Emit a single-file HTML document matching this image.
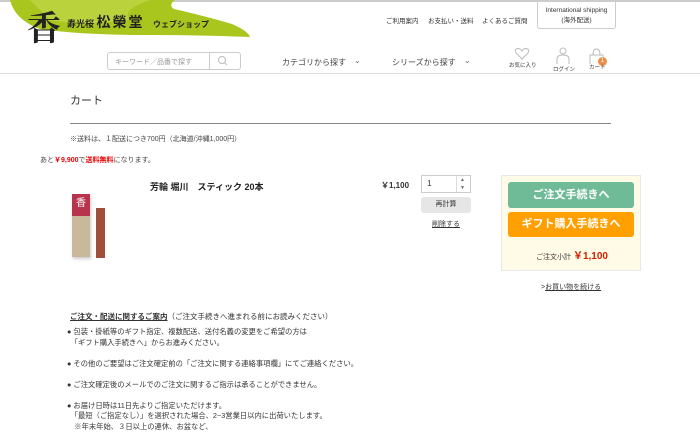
<!DOCTYPE html>
<html><head><meta charset="utf-8"><style>
*{margin:0;padding:0;box-sizing:border-box}
body{width:700px;height:431px;overflow:hidden;background:#fff;font-family:"Liberation Sans","Noto Sans CJK JP",sans-serif;color:#333;position:relative}
.a{position:absolute;white-space:nowrap}
</style></head><body>
<div class="a" style="left:0;top:0;width:700px;height:2px;background:#ccc"></div>
<svg class="a" style="left:0;top:0" width="260" height="40"><path d="M10 0 L175 0 Q168 5 174 9 Q205 16 232 24 Q248 31 250 37 Q200 35 150 35 Q80 35 40 29 Q15 20 10 0Z" fill="#a9c61e"/><path d="M30 0 L150 0 Q120 10 130 20 Q80 26 50 20 Z" fill="#c2d94a" opacity=".7"/></svg>
<div class="a" style="left:27px;top:1px;font:bold 34px 'Noto Serif CJK SC',serif;color:#222">香</div>
<div class="a" style="left:67px;top:12px;font-size:9px;color:#222;font-weight:bold">寿光桜 <span style="font-size:14px;letter-spacing:2px">松榮堂</span> <span style="font-size:8px;margin-left:6px">ウェブショップ</span></div>
<div class="a" style="left:386px;top:15px;font-size:6.5px">ご利用案内</div>
<div class="a" style="left:428px;top:15px;font-size:6.5px">お支払い・送料</div>
<div class="a" style="left:482px;top:15px;font-size:6.5px">よくあるご質問</div>
<div class="a" style="left:537px;top:0;width:79px;height:29px;border:1px solid #ccc;border-top:none;border-radius:0 0 3px 3px;font-size:6.5px;text-align:center;line-height:10px;padding-top:6px">International shipping<br>(海外配送)</div>
<div class="a" style="left:107px;top:52px;width:134px;height:18px;border:1px solid #ccc;border-radius:3px"></div>
<div class="a" style="left:209px;top:52px;width:1px;height:18px;background:#ccc"></div>
<div class="a" style="left:115px;top:57px;font-size:7px;color:#999">キーワード／品番で探す</div>
<svg class="a" style="left:217px;top:55px" width="12" height="12"><circle cx="5" cy="5" r="3.5" fill="none" stroke="#bbb"/><path d="M7.5 7.5 L10 10" stroke="#bbb"/></svg>
<div class="a" style="left:282px;top:57px;font-size:8px;color:#444">カテゴリから探す</div>
<div class="a" style="left:354px;top:56px;font-size:8px;color:#666">⌄</div>
<div class="a" style="left:392px;top:57px;font-size:8px;color:#444">シリーズから探す</div>
<div class="a" style="left:464px;top:56px;font-size:8px;color:#666">⌄</div>
<svg class="a" style="left:514px;top:47px" width="16" height="14"><path d="M8 12 L2 6 Q0 2 4 1.5 Q7 1.5 8 4 Q9 1.5 12 1.5 Q16 2 14 6Z" fill="none" stroke="#bbb"/></svg>
<div class="a" style="left:509px;top:61px;font-size:5.5px">お気に入り</div>
<svg class="a" style="left:556px;top:47px" width="14" height="18"><circle cx="7" cy="4" r="3" fill="none" stroke="#bbb"/><path d="M1 17 V12 Q1 8 7 8 Q13 8 13 12 V17" fill="none" stroke="#bbb"/></svg>
<div class="a" style="left:553px;top:65px;font-size:5.5px">ログイン</div>
<svg class="a" style="left:589px;top:47px" width="16" height="18"><path d="M1 17 V8 H14 V17 M4 8 Q4 2 7.5 2 Q11 2 11 8" fill="none" stroke="#bbb"/></svg>
<div class="a" style="left:598px;top:57px;width:9px;height:9px;border-radius:50%;background:#e8904a;color:#fff;font-size:6px;text-align:center;line-height:9px">1</div>
<div class="a" style="left:589px;top:63px;font-size:5.5px">カート</div>
<div class="a" style="left:0;top:73px;width:700px;height:1px;background:#ddd"></div>
<div class="a" style="left:70px;top:92px;font-size:11px;color:#333">カート</div>
<div class="a" style="left:70px;top:123px;width:541px;height:1px;background:#888"></div>
<div class="a" style="left:70px;top:134px;font-size:7px;color:#444">※送料は、１配送につき700円（北海道/沖縄1,000円）</div>
<div class="a" style="left:40px;top:155px;font-size:7px;color:#444">あと<b style="color:#e00">￥9,900</b>で<b style="color:#e00">送料無料</b>になります。</div>
<div class="a" style="left:72px;top:194px;width:18px;height:63px;background:#c9b99c;box-shadow:1px 2px 3px #ccc"></div>
<div class="a" style="left:72px;top:194px;width:18px;height:22px;background:#b8344e;color:#fff;font-size:10px;text-align:center">香</div>
<div class="a" style="left:96px;top:208px;width:9px;height:50px;background:#a0503a"></div>
<div class="a" style="left:150px;top:180px;font-size:9px;font-weight:bold;color:#222">芳輪 堀川　スティック 20本</div>
<div class="a" style="left:381px;top:180px;font-size:8px;font-weight:bold;color:#333">￥1,100</div>
<div class="a" style="left:421px;top:175px;width:50px;height:18px;border:1px solid #ccc;font-size:8px;padding:3px 5px">1</div>
<div class="a" style="left:456px;top:176px;width:1px;height:16px;background:#ddd"></div>
<div class="a" style="left:460px;top:176px;font-size:5px;color:#666;line-height:8px">▲<br>▼</div>
<div class="a" style="left:421px;top:197px;width:50px;height:16px;background:#e6e6e6;border-radius:3px;font-size:7px;text-align:center;line-height:16px">再計算</div>
<div class="a" style="left:432px;top:219px;font-size:7px;text-decoration:underline">削除する</div>
<div class="a" style="left:501px;top:175px;width:140px;height:96px;background:#fffbe6;border:1px solid #e8e8e8"></div>
<div class="a" style="left:508px;top:182px;width:126px;height:26px;background:#6fbb97;border-radius:3px;color:#fff;font-size:11px;font-weight:bold;text-align:center;line-height:26px">ご注文手続きへ</div>
<div class="a" style="left:508px;top:212px;width:126px;height:25px;background:#ffa000;border-radius:3px;color:#fff;font-size:11px;font-weight:bold;text-align:center;line-height:25px">ギフト購入手続きへ</div>
<div class="a" style="left:536px;top:247px;font-size:7px">ご注文小計 <b style="color:#d02000;font-size:10px">￥1,100</b></div>
<div class="a" style="left:541px;top:282px;font-size:7px">&gt;<u>お買い物を続ける</u></div>
<div class="a" style="left:70px;top:312px;font-size:7.5px;line-height:10px"><b><u>ご注文・配送に関するご案内</u></b>（ご注文手続きへ進まれる前にお読みください）</div>
<div class="a" style="left:67px;top:327px;font-size:7.3px;line-height:10.5px;color:#333">● 包装・掛紙等のギフト指定、複数配送、送付名義の変更をご希望の方は<br>　「ギフト購入手続きへ」からお進みください。<br><br>● その他のご要望はご注文確定前の「ご注文に関する連絡事項欄」にてご連絡ください。<br><br>● ご注文確定後のメールでのご注文に関するご指示は承ることができません。<br><br>● お届け日時は11日先よりご指定いただけます。<br>　「最短（ご指定なし）」を選択された場合、2~3営業日以内に出荷いたします。<br>　※年末年始、３日以上の連休、お盆など、</div>
</body></html>
